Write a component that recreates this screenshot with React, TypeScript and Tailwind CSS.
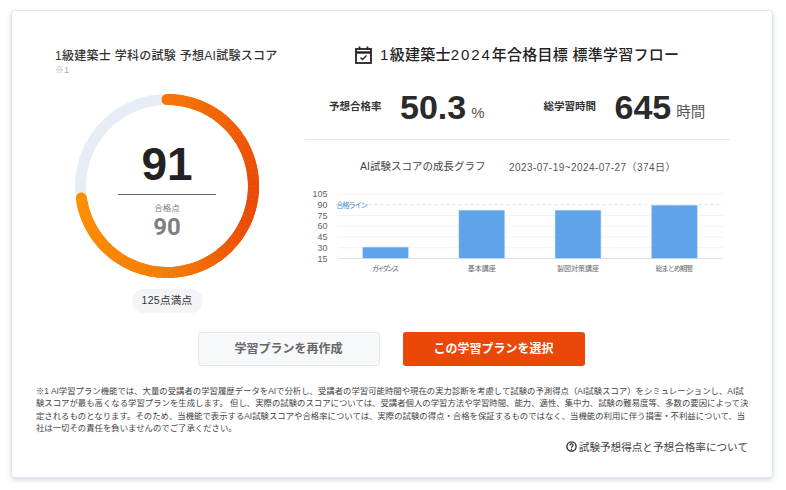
const sans = "font-['Liberation_Sans','Noto_Sans_CJK_JP',sans-serif]";

function Ring() {
  const c = 92, r = 86.5, n = 90, total = 262;
  const stops: [number, number[]][] = [
    [0, [247, 118, 6]], [90, [234, 74, 6]], [120, [236, 78, 6]], [180, [246, 124, 6]], [262, [255, 143, 0]],
  ];
  const color = (a: number) => {
    for (let i = 0; i < stops.length - 1; i++) {
      const [a0, c0] = stops[i];
      const [a1, c1] = stops[i + 1];
      if (a <= a1) {
        const t = (a - a0) / (a1 - a0);
        return `rgb(${c0.map((v, k) => Math.round(v + (c1[k] - v) * t)).join(",")})`;
      }
    }
    return "rgb(255,143,0)";
  };
  const pt = (a: number) => {
    const t = (a * Math.PI) / 180;
    return [c + r * Math.sin(t), c - r * Math.cos(t)];
  };
  const segs = Array.from({ length: n }, (_, i) => {
    const a0 = (i * total) / n;
    const a1 = ((i + 1) * total) / n;
    const [x0, y0] = pt(a0);
    const [x1, y1] = pt(a1);
    return { d: `M${x0} ${y0}A${r} ${r} 0 0 1 ${x1} ${y1}`, col: color((a0 + a1) / 2), i };
  });
  return (
    <svg width="184" height="184" viewBox="0 0 184 184" className="col-start-1 row-start-1 block">
      <circle cx={c} cy={c} r={r} fill="none" stroke="#e6edf4" strokeWidth="11" />
      {segs.map((s) => (
        <path key={s.i} d={s.d} fill="none" stroke={s.col} strokeWidth="11"
          strokeLinecap={s.i === 0 || s.i === n - 1 ? "round" : "butt"} />
      ))}
      {segs.slice(1, n - 1).map((s) => (
        <path key={"o" + s.i} d={s.d} fill="none" stroke={s.col} strokeWidth="11" strokeLinecap="butt" />
      ))}
    </svg>
  );
}

function Chart() {
  const ys = [105, 90, 75, 60, 45, 30, 15];
  const y = (v: number) => 258.5 - ((v - 15) / 90) * 64.5;
  const bars = [
    { x: 362.5, v: 31, l: "ガイダンス", w: 27 },
    { x: 458.8, v: 82.5, l: "基本講座", w: 28 },
    { x: 555, v: 82.5, l: "製図対策講座", w: 42 },
    { x: 651.3, v: 89.5, l: "総まとめ期間", w: 37 },
  ];
  const font = "'Liberation Sans','Noto Sans CJK JP',sans-serif";
  return (
    <svg width="425" height="92" viewBox="305 188 425 92" className="block mt-[14px]" fontFamily={font}>
      {ys.map((v) => (
        <g key={v}>
          <text x="327.5" y={y(v) + 3} textAnchor="end" fontSize="9" fill="#666">{v}</text>
          {v === 90 ? (
            <line x1="338" x2="723" y1={y(v)} y2={y(v)} stroke="#e4e6ea" strokeWidth="1" strokeDasharray="4 2" />
          ) : (
            <line x1="338" x2="723" y1={y(v)} y2={y(v)} stroke={v === 15 ? "#dbe3ee" : "#f0f2f5"} strokeWidth="1" />
          )}
        </g>
      ))}
      <text x="336" y="208" fontSize="7.5" fill="#4f90cf" textLength="32">合格ライン</text>
      {bars.map((b) => (
        <g key={b.l}>
          <rect x={b.x} y={y(b.v)} width="46" height={258.5 - y(b.v)} fill="#5fa3ea" stroke="#cfe3f8" strokeWidth="0.6" />
          <text x={b.x + 23 - b.w / 2} y="271" fontSize="7" fill="#666" textLength={b.w}>{b.l}</text>
        </g>
      ))}
    </svg>
  );
}

export default function App() {
  return (
    <div className={`${sans} w-[786px] h-[490px] bg-white pt-[10px] pl-[11px] overflow-hidden`}>
      <div className="w-[762px] h-[468px] bg-white border border-[#dbe6f6] rounded-[4px] shadow-[0_2px_5px_rgba(120,140,170,0.3)] pl-[24px] pr-[24px] flex flex-col">
        <div className="flex h-[311px] pl-[19px] pr-[17px] gap-[26px]">
          <div className="w-[224px] flex flex-col">
            <h2 className="mt-[36px] text-[12px] leading-[18px] font-medium text-[#333] whitespace-nowrap tracking-[0.28px]">1級建築士 学科の試験 予想AI試験スコア</h2>
            <div className="text-[9px] leading-[10px] text-[#aaa]">※1</div>
            <div className="mt-[19px] ml-[20px] w-[184px] grid">
              <Ring />
              <div className="col-start-1 row-start-1 flex flex-col items-center z-10">
                <div className="mt-[44px] text-[46px] leading-[52px] font-bold text-[#222]">91</div>
                <div className="mt-[4px] w-[98px] border-t border-[#666]"></div>
                <div className="mt-[8px] text-[8.5px] leading-[11px] text-[#777]">合格点</div>
                <div className="text-[24px] leading-[26px] font-bold text-[#808080] font-['Roboto','Liberation_Sans',sans-serif]">90</div>
              </div>
            </div>
            <div className="mt-[11px] self-center h-[24px] w-[71px] rounded-full bg-[#f3f4f7] flex items-center justify-center text-[10.5px] tracking-[0.3px] text-[#333] whitespace-nowrap">125点満点</div>
          </div>
          <div className="w-[425px] flex flex-col">
            <div className="mt-[33px] ml-[50px] flex items-center gap-[8px] h-[22px]">
              <svg width="17" height="18" viewBox="0 0 17 18" fill="none" stroke="#222" strokeWidth="1.8">
                <rect x="1" y="3" width="15" height="14" />
                <path d="M1 6.5h15" strokeWidth="2.4" />
                <path d="M4.5 0.5v3M12.5 0.5v3" />
                <path d="M5.5 11.5l2 2 4-4" strokeWidth="1.4" />
              </svg>
              <h2 className="text-[15px] leading-[22px] font-medium text-[#222] whitespace-nowrap tracking-[0.25px]">
                <span className="tracking-[1.5px]">1</span>級建築士<span className="tracking-[1.9px]">2024</span>年合格目標 標準学習フロー
              </h2>
            </div>
            <div className="mt-[14px] h-[54px] flex items-center pl-[24px]">
              <span className="w-[71px] text-[10.5px] font-bold text-[#333] whitespace-nowrap">予想合格率</span>
              <span className="text-[34px] leading-[40px] font-bold text-[#2a2a2a]">50.3</span>
              <span className="ml-[5px] mt-[12px] text-[15px] text-[#555]">%</span>
              <span className="ml-[59px] w-[71px] text-[10.5px] font-bold text-[#333] whitespace-nowrap">総学習時間</span>
              <span className="text-[34px] leading-[40px] font-bold text-[#2a2a2a]">645</span>
              <span className="ml-[5px] mt-[12px] text-[14.5px] text-[#555] whitespace-nowrap">時間</span>
            </div>
            <div className="mt-[5px] border-t border-[#e8e8e8]"></div>
            <div className="mt-[20px] h-[14px] flex items-center pl-[55px] whitespace-nowrap">
              <span className="w-[149px] text-[10.5px] text-[#444]">AI試験スコアの成長グラフ</span>
              <span className="text-[10px] tracking-[0.45px] text-[#555]">2023-07-19~2024-07-27（374日）</span>
            </div>
            <Chart />
          </div>
        </div>
        <div className="mt-[10px] flex justify-center gap-[23px] h-[34px] pr-[2px]">
          <button className="w-[182px] h-[34px] rounded-[3px] bg-[#f7f8fa] border border-[#e4e7eb] text-[12px] font-bold text-[#666]">学習プランを再作成</button>
          <button className="w-[182px] h-[34px] rounded-[3px] bg-[#ea4709] text-[12px] font-bold text-white">この学習プランを選択</button>
        </div>
        <p className="mt-[19px] text-[8.4px] leading-[12.4px] text-[#444] whitespace-nowrap">
          ※1 AI学習プラン機能では、大量の受講者の学習履歴データをAIで分析し、受講者の学習可能時間や現在の実力診断を考慮して試験の予測得点（AI試験スコア）をシミュレーションし、AI試<br />
          験スコアが最も高くなる学習プランを生成します。 但し、実際の試験のスコアについては、受講者個人の学習方法や学習時間、能力、適性、集中力、試験の難易度等、多数の要因によって決<br />
          定されるものとなります。そのため、当機能で表示するAI試験スコアや合格率については、実際の試験の得点・合格を保証するものではなく、当機能の利用に伴う損害・不利益について、当<br />
          社は一切その責任を負いませんのでご了承ください。
        </p>
        <div className="mt-[5px] flex items-center justify-end gap-[2px] text-[10.6px] leading-[14px] text-[#444] whitespace-nowrap">
          <svg width="11" height="11" viewBox="0 0 11 11" fill="none" stroke="#222">
            <circle cx="5.5" cy="5.5" r="4.6" strokeWidth="1.3" />
            <path d="M3.9 4.4c0-2 3.2-2 3.2-.1 0 1.2-1.6 1.2-1.6 2.5" strokeWidth="1.1" />
            <circle cx="5.5" cy="8.2" r="0.7" fill="#222" stroke="none" />
          </svg>
          <span>試験予想得点と予想合格率について</span>
        </div>
      </div>
    </div>
  );
}
